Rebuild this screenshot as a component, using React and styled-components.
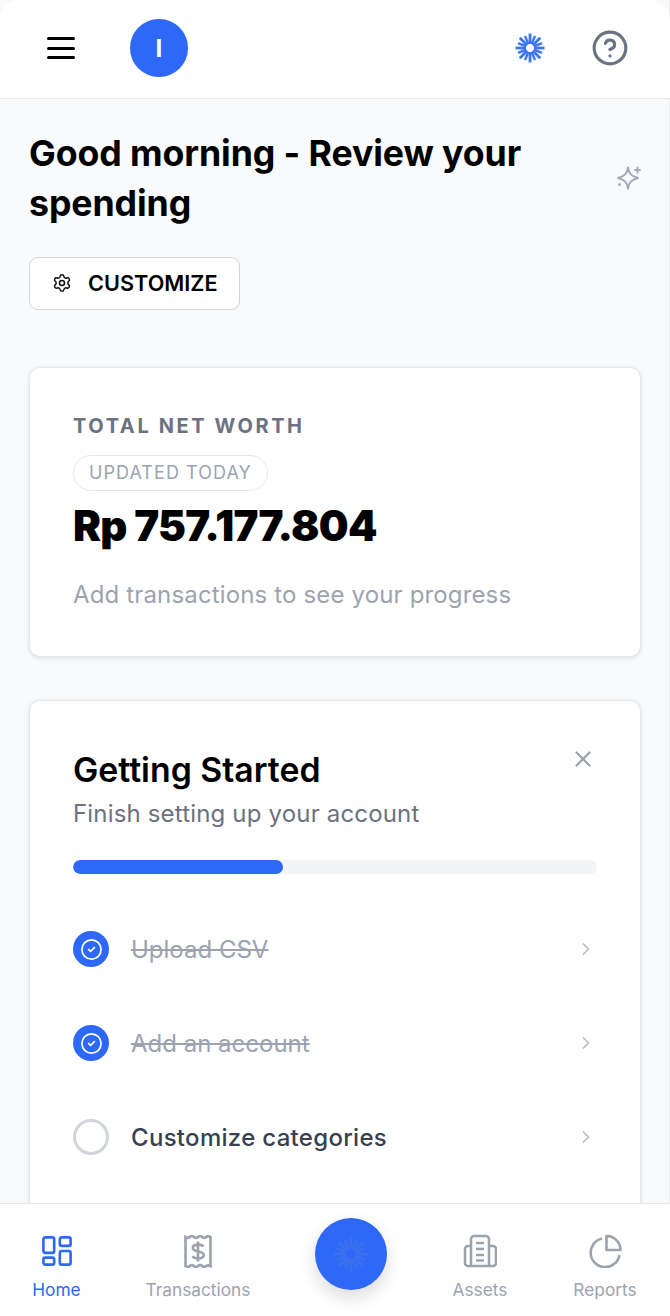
import React from 'react';
import styled, { createGlobalStyle } from 'styled-components';
import { Settings, X, ChevronRight, CircleHelp, CircleCheck } from 'lucide-react';

const BLUE = '#2d68f8';

const GlobalStyle = createGlobalStyle`
  html, body {
    margin: 0;
    padding: 0;
    height: 100%;
    background: #fff;
    font-family: 'Inter', 'Liberation Sans', sans-serif;
  }
  * { box-sizing: border-box; }
`;

// thick rays around a small hollow centre, used in the header and the action button
const Burst = ({ size, color }) => {
  const rays = Array.from({ length: 16 }, (_, i) => (i * 360) / 16);
  return (
    <svg width={size} height={size} viewBox="0 0 30 30" fill="none">
      {rays.map((a) => (
        <line
          key={a}
          x1="15"
          y1={a % 45 === 0 ? 0.5 : 2}
          x2="15"
          y2="11"
          stroke={color}
          strokeWidth={a % 45 === 0 ? 2.8 : 2.4}
          transform={`rotate(${a} 15 15)`}
        />
      ))}
    </svg>
  );
};

const StarIcon = () => (
  <StarSvg width="26" height="26" viewBox="0 0 26 26" fill="none" stroke="#a3abb8" strokeWidth="2" strokeLinejoin="round" strokeLinecap="round">
    <path d="M12 2.500c1 6.300 3.200 8.400 10 10.500-6.800 2.100-9 4.200-10 10.500-1-6.300-3.200-8.400-10-10.500 6.800-2.100 9-4.200 10-10.500z" />
    <path d="M21.500 2.500v5M19 5h5" />
    <path d="M3.500 19.500v.01" strokeWidth="3" />
  </StarSvg>
);

const HomeIcon = () => (
  <svg width="30" height="30" viewBox="0 0 32 32" fill="none" stroke={BLUE} strokeWidth="2.800" strokeLinejoin="round">
    <rect x="1.500" y="1.500" width="11.500" height="16.500" rx="2" />
    <rect x="19" y="1.500" width="11.500" height="9" rx="2" />
    <rect x="1.500" y="23" width="11.500" height="7.500" rx="2" />
    <rect x="19" y="16" width="11.500" height="14.500" rx="2" />
  </svg>
);

const ReceiptIcon = () => (
  <svg width="28" height="33" viewBox="0 0 28 33" fill="none" stroke="#9ca3af" strokeWidth="2.600">
    <path d="M1.500 2c2 1.300 3 1.300 4.200 0s2.800-1.300 4.100 0 2.900 1.300 4.200 0 2.900-1.300 4.200 0 2.900 1.300 4.100 0 2.200-1 4.200 0v29c-2-1-3-1-4.200 0s-2.800 1.300-4.100 0-2.900-1.300-4.200 0-2.900 1.300-4.200 0-2.900-1.300-4.100 0-2.200 1-4.200 0z" />
    <path d="M19.500 11.500c-1-1.400-2.900-1.900-5.400-1.900-3 0-5.300 1-5.300 3.300 0 4.800 11 2.300 11 7.100 0 2.400-2.600 3.400-5.600 3.400-2.600 0-4.600-.7-5.800-2.200M14 6.500v20" />
  </svg>
);

const AssetsIcon = () => (
  <svg width="34" height="34" viewBox="0 0 34 34" fill="none" stroke="#9ca3af" strokeWidth="2.600" strokeLinejoin="round">
    <path d="M8 32V5a3 3 0 0 1 3-3h12a3 3 0 0 1 3 3v27" />
    <path d="M26 12h4a3 3 0 0 1 3 3v14a3 3 0 0 1-3 3H5a3 3 0 0 1-3-3V15a3 3 0 0 1 3-3h3" />
    <path d="M13 9h8M13 15h8M13 21h8M13 26.500h8" />
  </svg>
);

const ReportsIcon = () => (
  <svg width="34" height="34" viewBox="0 0 34 34" fill="none" stroke="#9ca3af" strokeWidth="2.600" strokeLinejoin="round">
    <path d="M14 4.500A14.500 14.500 0 1 0 31.500 21" />
    <path d="M18.500 2A14 14 0 0 1 32.500 16H18.500z" />
  </svg>
);

const STEPS = [
  { id: 0, label: 'Upload CSV', done: true },
  { id: 1, label: 'Add an account', done: true },
  { id: 2, label: 'Customize categories', done: false },
];

const NAV = [
  { id: 'home', label: 'Home', icon: <HomeIcon />, width: 113, active: true },
  { id: 'transactions', label: 'Transactions', icon: <ReceiptIcon />, width: 170 },
  { id: 'assets', label: 'Assets', icon: <AssetsIcon />, width: 122 },
  { id: 'reports', label: 'Reports', icon: <ReportsIcon />, width: 128 },
];

const NavLink = ({ item }) => (
  <NavItem $active={item.active} $width={item.width}>
    <NavIcon>{item.icon}</NavIcon>
    {item.label}
  </NavItem>
);

const App = () => (
  <Screen>
    <GlobalStyle />
    <Header>
      <HeaderLeft>
        <MenuButton aria-label="Menu">
          <span />
          <span />
          <span />
        </MenuButton>
        <Avatar>I</Avatar>
      </HeaderLeft>
      <HeaderRight>
        <Burst size={30} color="#3b76f6" />
        <CircleHelp size={38} color="#6b7280" strokeWidth={2} />
      </HeaderRight>
    </Header>

    <Main>
      <TitleRow>
        <Title>Good morning - Review your spending</Title>
        <StarIcon />
      </TitleRow>

      <CustomizeButton type="button">
        <Settings size={20} color="#111" strokeWidth={1.8} />
        CUSTOMIZE
      </CustomizeButton>

      <Card>
        <Eyebrow>TOTAL NET WORTH</Eyebrow>
        <Pill>UPDATED TODAY</Pill>
        <Amount>Rp 757.177.804</Amount>
        <Hint>Add transactions to see your progress</Hint>
      </Card>

      <StartedCard>
        <CloseButton aria-label="Close">
          <X size={26} color="#9ca3af" strokeWidth={2} />
        </CloseButton>
        <CardTitle>Getting Started</CardTitle>
        <CardSub>Finish setting up your account</CardSub>
        <Track>
          <Fill style={{ width: `${(2 / 5) * 100}%` }} />
        </Track>
        <Steps>
          {STEPS.map((s) => (
            <Step key={s.id}>
              {s.done ? (
                <DoneDot>
                  <CircleCheck size={23} color="#fff" strokeWidth={1.8} />
                </DoneDot>
              ) : (
                <EmptyDot />
              )}
              <StepLabel $done={s.done}>{s.label}</StepLabel>
              <ChevronRight size={20} color="#b6bcc6" strokeWidth={2} />
            </Step>
          ))}
        </Steps>
      </StartedCard>
    </Main>

    <BottomNav>
      <NavLink item={NAV[0]} />
      <NavLink item={NAV[1]} />
      <ActionSlot>
        <ActionButton aria-label="Add">
          <Burst size={36} color="#3a70ee" />
        </ActionButton>
      </ActionSlot>
      <NavLink item={NAV[2]} />
      <NavLink item={NAV[3]} />
    </BottomNav>
  </Screen>
);

export default App;

const Screen = styled.div`
  display: flex;
  flex-direction: column;
  height: 100vh;
  overflow: hidden;
  background: #f9fafc;
  box-shadow: inset -1px 0 0 #eceef1;
`;

const Header = styled.header`
  flex: none;
  height: 99px;
  display: flex;
  align-items: center;
  justify-content: space-between;
  padding: 0 41px 2px 47px;
  background: #fff;
  border-bottom: 1px solid #e5e7eb;
  border-radius: 20px 20px 0 0;
`;

const HeaderLeft = styled.div`
  display: flex;
  align-items: center;
  gap: 55px;
`;

const HeaderRight = styled.div`
  display: flex;
  align-items: center;
  gap: 46px;
`;

const MenuButton = styled.div`
  width: 28px;
  display: flex;
  flex-direction: column;
  gap: 6.500px;

  span {
    display: block;
    height: 3px;
    border-radius: 2px;
    background: #000;
  }
`;

const Avatar = styled.div`
  width: 57.500px;
  height: 57.500px;
  border-radius: 50%;
  background: ${BLUE};
  color: #fff;
  display: flex;
  align-items: center;
  justify-content: center;
  font-size: 24px;
  font-weight: 700;
`;

const Main = styled.main`
  flex: 1;
  min-height: 0;
  overflow: hidden;
  padding: 29px 29px 0;
`;

const TitleRow = styled.div`
  display: flex;
  align-items: center;
  justify-content: space-between;
  gap: 60px;
`;

const StarSvg = styled.svg`
  flex: none;
  margin-right: -1px;
`;

const Title = styled.h1`
  margin: 0;
  font-size: 35.700px;
  line-height: 50px;
  font-weight: 700;
  letter-spacing: -0.1px;
  color: #000;
`;

const CustomizeButton = styled.button`
  display: flex;
  align-items: center;
  gap: 16px;
  width: 211px;
  height: 53px;
  margin-top: 29px;
  padding: 0 0 2px 22px;
  background: #fff;
  border: 1px solid #d1d5db;
  border-radius: 9px;
  font-family: inherit;
  font-size: 21.700px;
  font-weight: 600;
  color: #000;
`;

const Card = styled.section`
  margin-top: 57px;
  padding: 44px 43px;
  height: 290px;
  background: #fff;
  border: 1px solid #e5e7eb;
  border-radius: 11px;
  box-shadow: 0 1px 4px rgba(0, 0, 0, 0.12);
`;

const Eyebrow = styled.div`
  font-size: 20px;
  line-height: 28px;
  font-weight: 700;
  letter-spacing: 2.600px;
  color: #6b7280;
`;

const Pill = styled.div`
  display: inline-block;
  margin-top: 15px;
  height: 36px;
  padding: 0 15px;
  line-height: 34px;
  border: 1px solid #e5e7eb;
  border-radius: 18px;
  font-size: 18px;
  letter-spacing: 1.050px;
  color: #9ca3af;
`;

const Amount = styled.div`
  font-size: 42px;
  line-height: 54px;
  margin-top: 8px;
  font-weight: 900;
  letter-spacing: -0.75px;
  color: #000;
`;

const Hint = styled.div`
  margin-top: 26px;
  font-size: 24px;
  line-height: 32px;
  letter-spacing: 0.15px;
  color: #9ca3af;
`;

const StartedCard = styled.section`
  position: relative;
  margin-top: 43px;
  padding: 45px 43px 0;
  height: 700px;
  background: #fff;
  border: 1px solid #e5e7eb;
  border-radius: 11px;
  box-shadow: 0 1px 4px rgba(0, 0, 0, 0.12);
`;

const CloseButton = styled.div`
  position: absolute;
  top: 45px;
  right: 44px;
  display: flex;
`;

const CardTitle = styled.h2`
  margin: 0;
  font-size: 33.800px;
  line-height: 48px;
  font-weight: 600;
  color: #000;
`;

const CardSub = styled.div`
  margin-top: 2px;
  font-size: 24px;
  line-height: 36px;
  letter-spacing: 0.17px;
  color: #6b7280;
`;

const Track = styled.div`
  margin-top: 28px;
  height: 14px;
  border-radius: 7px;
  background: #f3f4f6;
  overflow: hidden;
`;

const Fill = styled.div`
  height: 100%;
  border-radius: 7px;
  background: ${BLUE};
`;

const Steps = styled.div`
  margin-top: 57px;
  display: flex;
  flex-direction: column;
  gap: 58px;
`;

const Step = styled.div`
  display: flex;
  align-items: center;
  height: 36px;
  gap: 22px;
  padding-right: 1px;
`;

const DoneDot = styled.div`
  width: 36px;
  height: 36px;
  flex: none;
  border-radius: 50%;
  background: ${BLUE};
  display: flex;
  align-items: center;
  justify-content: center;
`;

const EmptyDot = styled.div`
  width: 36px;
  height: 36px;
  flex: none;
  border-radius: 50%;
  border: 3px solid #d1d5db;
`;

const StepLabel = styled.div`
  flex: 1;
  font-size: 24px;
  font-weight: ${(p) => (p.$done ? 400 : 500)};
  letter-spacing: ${(p) => (p.$done ? 0 : '0.3px')};
  color: ${(p) => (p.$done ? '#9ca3af' : '#374151')};
  text-decoration: ${(p) => (p.$done ? 'line-through' : 'none')};
`;

const BottomNav = styled.nav`
  flex: none;
  height: 113px;
  display: flex;
  align-items: flex-start;
  background: #fff;
  border-top: 1px solid #e5e7eb;
`;

const NavItem = styled.div`
  width: ${(p) => p.$width}px;
  display: flex;
  flex-direction: column;
  align-items: center;
  gap: 10px;
  padding-top: 30px;
  font-size: 17.300px;
  line-height: 24px;
  color: ${(p) => (p.$active ? BLUE : '#9ca3af')};
`;

const NavIcon = styled.div`
  height: 34px;
  display: flex;
  align-items: center;
  justify-content: center;
`;

const ActionSlot = styled.div`
  width: 136px;
  display: flex;
  justify-content: center;
  padding-top: 14px;
`;

const ActionButton = styled.div`
  width: 72px;
  height: 72px;
  border-radius: 50%;
  background: ${BLUE};
  display: flex;
  align-items: center;
  justify-content: center;
  box-shadow: 0 8px 18px rgba(0, 0, 0, 0.14);
`;
